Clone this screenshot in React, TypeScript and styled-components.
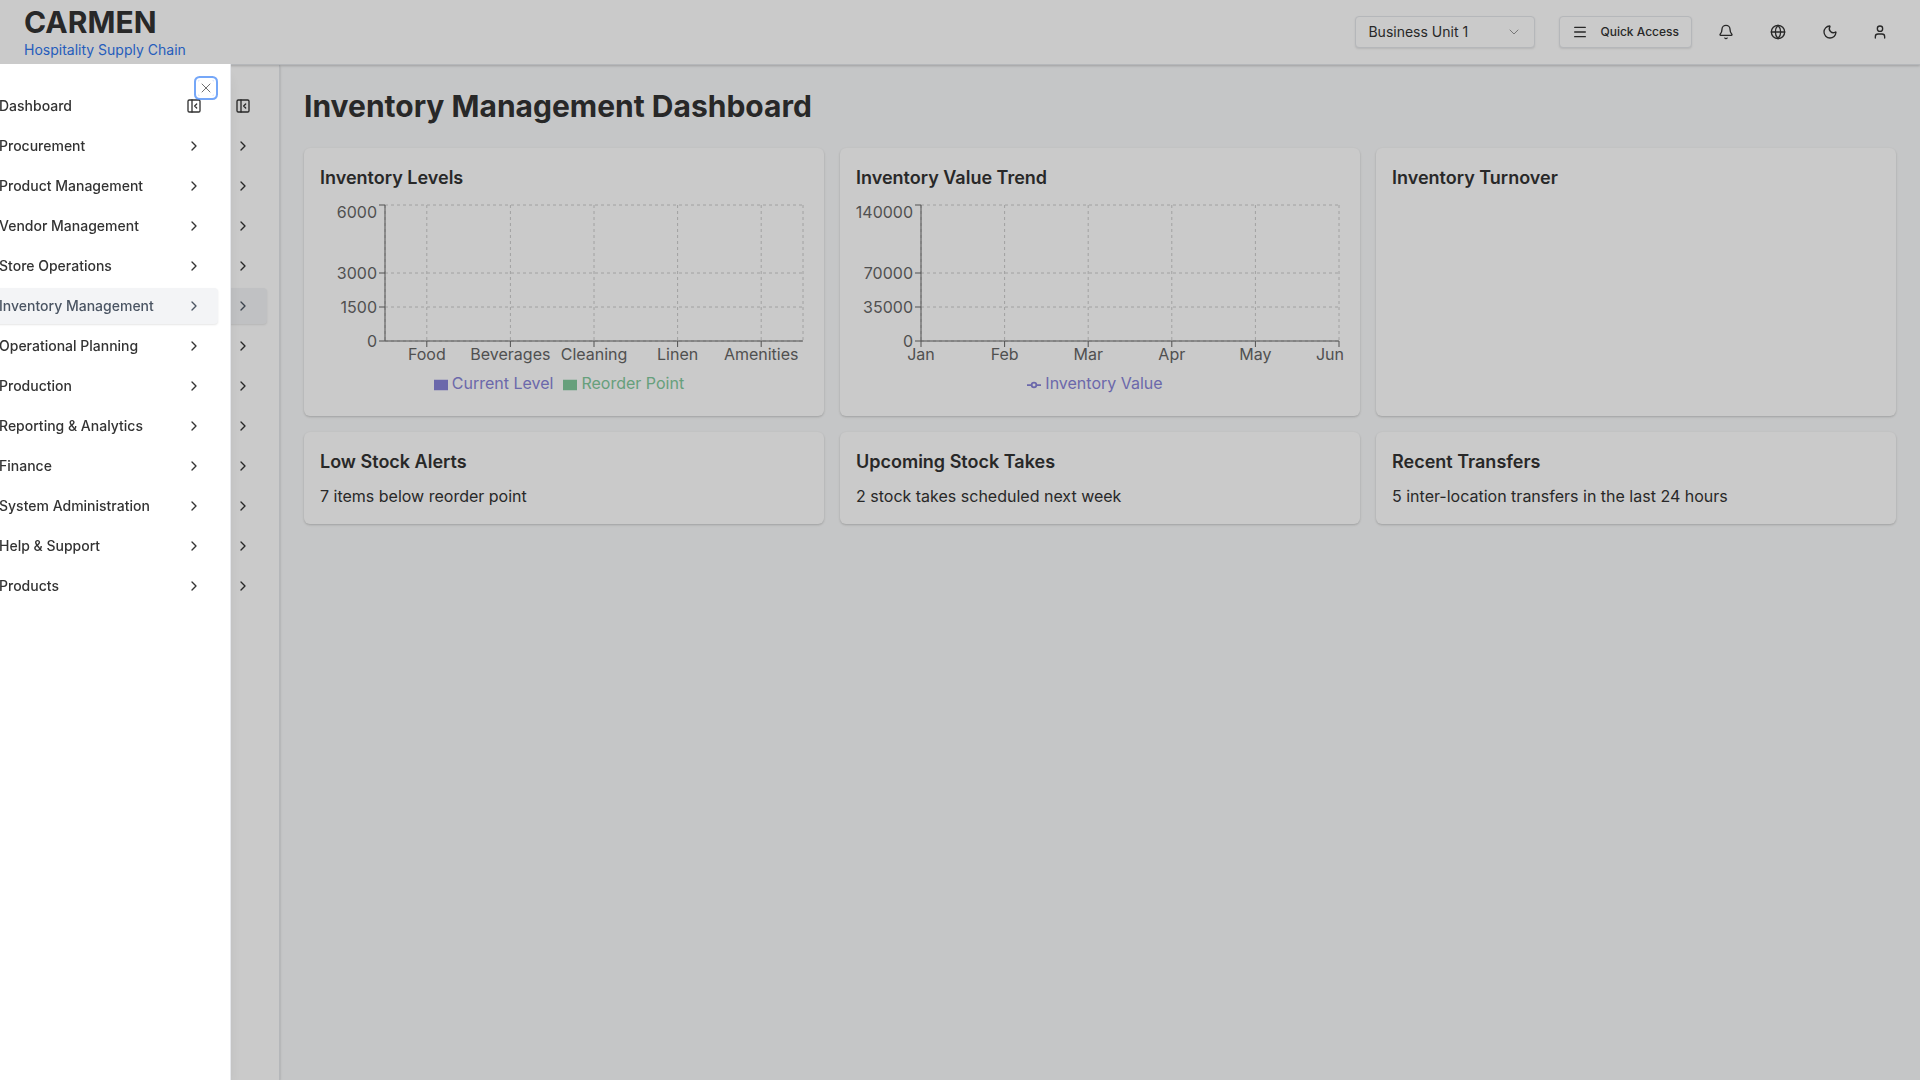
import React, { useEffect, useRef, useState } from "react";
import styled, { createGlobalStyle, css } from "styled-components";
import { Bell, ChevronDown, ChevronRight, Globe, Menu, Moon, PanelLeftClose, User, X } from "lucide-react";

const colors = {
  text: "#333333",
  muted: "#4b5563",
  surface: "#ffffff",
  page: "#f9fafb",
  border: "#e5e7eb",
  active: "#f3f4f6",
  blue: "#3b82f6",
  link: "#2f76ee",
  axis: "#666666",
  grid: "#cccccc",
  purple: "#8884d8",
  green: "#82ca9d",
};

const GlobalStyle = createGlobalStyle`
  *, *::before, *::after { box-sizing: border-box; }
  body {
    margin: 0;
    font-family: Inter, "Liberation Sans", sans-serif;
    font-size: 16px;
    line-height: 24px;
    color: ${colors.text};
    background: ${colors.page};
    -webkit-font-smoothing: antialiased;
  }
  h1, h2, p, ul { margin: 0; padding: 0; }
  button, select { font: inherit; color: inherit; }
`;

const Shell = styled.div`
  display: flex;
  flex-direction: column;
  min-height: 100vh;
`;

const Header = styled.header`
  display: flex;
  align-items: center;
  justify-content: space-between;
  height: 65px;
  padding: 0 24px;
  background: ${colors.surface};
  border-bottom: 1px solid ${colors.border};
  box-shadow: 0 1px 3px rgba(0, 0, 0, 0.1), 0 1px 2px rgba(0, 0, 0, 0.1);
  z-index: 1;
`;

const Brand = styled.a`
  display: flex;
  flex-direction: column;
  color: inherit;
  text-decoration: none;
`;

const BrandName = styled.span`
  font-size: 30px;
  line-height: 36px;
  font-weight: 700;
`;

const BrandTagline = styled.span`
  font-size: 14px;
  line-height: 20px;
  color: ${colors.link};
`;

const Tools = styled.div`
  display: flex;
  align-items: center;
  gap: 16px;
`;

const controlBox = css`
  height: 32px;
  border: 1px solid ${colors.border};
  border-radius: 4px;
  background: ${colors.surface};
  box-shadow: 0 1px 2px rgba(0, 0, 0, 0.1);
`;

const UnitPicker = styled.div`
  display: grid;
  align-items: center;
  width: 180px;
  margin-right: 8px;

  select, svg { grid-area: 1 / 1; }
  svg { justify-self: end; margin-right: 13px; opacity: 0.5; pointer-events: none; }
`;

const UnitSelect = styled.select`
  ${controlBox}
  width: 100%;
  padding: 0 12px;
  font-size: 14px;
  appearance: none;
`;

const QuickAccess = styled.button`
  ${controlBox}
  display: flex;
  align-items: center;
  gap: 12px;
  padding: 0 12px;
  font-size: 12px;
  line-height: 16px;
  font-weight: 500;
`;

const IconButton = styled.button<{ $narrow?: boolean }>`
  display: grid;
  place-items: center;
  width: ${(p) => (p.$narrow ? 32 : 36)}px;
  height: 36px;
  padding: 0;
  border: 0;
  background: none;
`;

const Body = styled.div`
  display: flex;
  flex: 1;
`;

const Sidebar = styled.aside`
  width: 280px;
  padding: 23px 12px;
  flex-shrink: 0;
  background: ${colors.surface};
  border-right: 1px solid ${colors.border};
  box-shadow: 0 1px 3px rgba(0, 0, 0, 0.1), 0 1px 2px rgba(0, 0, 0, 0.1);
`;

const NavList = styled.ul`
  display: flex;
  flex-direction: column;
  gap: 4px;
  list-style: none;
`;

const NavItem = styled.button<{ $active: boolean }>`
  display: flex;
  align-items: center;
  justify-content: space-between;
  width: 100%;
  height: 36px;
  padding: 0 16px 0 36px;
  border: 0;
  border-radius: 4px;
  font-size: 14px;
  line-height: 20px;
  font-weight: 500;
  text-align: left;
  background: ${(p) => (p.$active ? colors.active : "transparent")};
  color: ${(p) => (p.$active ? colors.muted : colors.text)};
  box-shadow: ${(p) => (p.$active ? "0 1px 2px rgba(0, 0, 0, 0.1)" : "none")};

  svg { margin-left: auto; }
`;

const Main = styled.main`
  flex: 1;
  min-width: 0;
  padding: 23px 24px 24px;
`;

const PageTitle = styled.h1`
  margin-bottom: 24px;
  font-size: 30px;
  line-height: 36px;
  font-weight: 700;
`;

const CardGrid = styled.div`
  display: grid;
  grid-template-columns: repeat(3, minmax(0, 1fr));
  gap: 16px;
`;

const Card = styled.section`
  padding: 16px;
  border-radius: 6px;
  background: ${colors.surface};
  box-shadow: 0 1px 3px rgba(0, 0, 0, 0.1), 0 1px 2px rgba(0, 0, 0, 0.1);
`;

const CardTitle = styled.h2`
  margin-bottom: 8px;
  font-size: 18px;
  line-height: 28px;
  font-weight: 600;
`;

const ChartArea = styled.div`
  height: 200px;
`;

const Plot = styled.svg`
  display: block;
  width: 100%;
  height: 171px;
  overflow: visible;

  text { font-size: 16px; fill: ${colors.axis}; }
`;

const Legend = styled.ul`
  padding-right: 10px;
  text-align: center;
  list-style: none;
`;

const LegendItem = styled.li<{ $color: string }>`
  display: inline-block;
  color: ${(p) => p.$color};

  & + & { margin-left: 10px; }
  svg { margin-right: 4px; vertical-align: middle; }
`;

const Overlay = styled.div`
  position: fixed;
  inset: 0;
  z-index: 10;
  background: rgba(0, 0, 0, 0.208);
`;

const Drawer = styled.div`
  position: fixed;
  top: 64px;
  bottom: 0;
  left: 0;
  z-index: 20;
  width: 280px;
  padding: 24px 12px;
  border-right: 1px solid ${colors.border};
  background: ${colors.surface};
  box-shadow: 0 10px 15px -3px rgba(0, 0, 0, 0.1), 0 4px 6px -4px rgba(0, 0, 0, 0.1);
  transform: translateX(-49px);
`;

const CloseButton = styled.button`
  position: absolute;
  top: 16px;
  right: 16px;
  display: grid;
  place-items: center;
  width: 16px;
  height: 16px;
  padding: 0;
  border: 0;
  border-radius: 2px;
  background: none;
  opacity: 0.7;
  box-shadow: 0 0 0 2px ${colors.surface}, 0 0 0 4px ${colors.blue};
`;

const navigation = [
  "Dashboard",
  "Procurement",
  "Product Management",
  "Vendor Management",
  "Store Operations",
  "Inventory Management",
  "Operational Planning",
  "Production",
  "Reporting & Analytics",
  "Finance",
  "System Administration",
  "Help & Support",
  "Products",
];

function Navigation({ iconsOnly = false }: { iconsOnly?: boolean }) {
  return (
    <nav aria-label={iconsOnly ? "Sidebar" : "Menu"}>
      <NavList>
        {navigation.map((label) => (
          <li key={label}>
            <NavItem type="button" aria-label={label} $active={label === "Inventory Management"}>
              {!iconsOnly && label}
              {label === "Dashboard" ? <PanelLeftClose size={16} /> : <ChevronRight size={16} />}
            </NavItem>
          </li>
        ))}
      </NavList>
    </nav>
  );
}

type ChartProps = {
  kind: "bar" | "line";
  max: number;
  categories: string[];
  series: { name: string; color: string }[];
};

const plotArea = { left: 65, top: 5, bottom: 141, rightMargin: 5 };

function Chart({ kind, max, categories, series }: ChartProps) {
  const box = useRef<HTMLDivElement>(null);
  const [width, setWidth] = useState(488);

  useEffect(() => {
    const node = box.current;
    if (!node) return;
    const observer = new ResizeObserver(() => setWidth(node.clientWidth));
    observer.observe(node);
    return () => observer.disconnect();
  }, []);

  const { left, top, bottom } = plotArea;
  const right = width - plotArea.rightMargin;
  const span = right - left;
  const xs = categories.map((_, i) =>
    kind === "bar" ? left + (span * (i + 0.5)) / categories.length : left + (span * i) / (categories.length - 1)
  );
  const verticals = kind === "bar" ? [...xs, left, right] : xs;
  const yTicks = [0, max / 4, max / 2, max].map((value) => ({
    value,
    y: bottom - ((bottom - top) * value) / max,
  }));

  return (
    <ChartArea ref={box}>
      <Plot role="img" aria-label={series.map((s) => s.name).join(", ")}>
        <g stroke={colors.grid} strokeDasharray="3 3">
          {yTicks.map(({ value, y }) => <line key={value} x1={left} x2={right} y1={y} y2={y} />)}
          {verticals.map((x) => <line key={x} x1={x} x2={x} y1={top} y2={bottom} />)}
        </g>
        <g stroke={colors.axis}>
          <line x1={left} x2={right} y1={bottom} y2={bottom} />
          <line x1={left} x2={left} y1={top} y2={bottom} />
          {xs.map((x) => <line key={x} x1={x} x2={x} y1={bottom} y2={bottom + 6} />)}
          {yTicks.map(({ value, y }) => <line key={value} x1={left - 6} x2={left} y1={y} y2={y} />)}
        </g>
        {yTicks.map(({ value, y }) => (
          <text key={value} x={left - 8} y={Math.max(y, 12)} dy="0.355em" textAnchor="end">{value}</text>
        ))}
        {xs.map((x, i) => {
          const atEdge = x > width - 10;
          return (
            <text key={x} x={atEdge ? width : x} y={bottom + 8} dy="0.71em" textAnchor={atEdge ? "end" : "middle"}>
              {categories[i]}
            </text>
          );
        })}
      </Plot>
      <Legend>
        {series.map(({ name, color }) => (
          <LegendItem key={name} $color={color}>
            <svg width="14" height="14" viewBox="0 0 32 32" aria-hidden="true">
              {kind === "bar" ? (
                <path d="M0,4h32v24h-32z" fill={color} />
              ) : (
                <path
                  d="M0,16h10.667A5.333,5.333,0,1,1,21.333,16H32M21.333,16A5.333,5.333,0,1,1,10.667,16"
                  fill="none"
                  stroke={color}
                  strokeWidth="4"
                />
              )}
            </svg>
            {name}
          </LegendItem>
        ))}
      </Legend>
    </ChartArea>
  );
}

export default function App() {
  return (
    <>
      <GlobalStyle />
      <Shell>
        <Header>
          <Brand href="#">
            <BrandName>CARMEN</BrandName>
            <BrandTagline>Hospitality Supply Chain</BrandTagline>
          </Brand>
          <Tools>
            <UnitPicker>
              <UnitSelect aria-label="Business unit" defaultValue="1">
                <option value="1">Business Unit 1</option>
              </UnitSelect>
              <ChevronDown size={16} strokeWidth={1.5} />
            </UnitPicker>
            <QuickAccess type="button">
              <Menu size={16} />
              Quick Access
            </QuickAccess>
            <IconButton type="button" aria-label="Notifications"><Bell size={16} /></IconButton>
            <IconButton type="button" aria-label="Language"><Globe size={16} /></IconButton>
            <IconButton type="button" aria-label="Theme"><Moon size={16} /></IconButton>
            <IconButton type="button" aria-label="Account" $narrow><User size={16} /></IconButton>
          </Tools>
        </Header>
        <Body>
          <Sidebar>
            <Navigation iconsOnly />
          </Sidebar>
          <Main>
            <PageTitle>Inventory Management Dashboard</PageTitle>
            <CardGrid>
              <Card>
                <CardTitle>Inventory Levels</CardTitle>
                <Chart
                  kind="bar"
                  max={6000}
                  categories={["Food", "Beverages", "Cleaning", "Linen", "Amenities"]}
                  series={[
                    { name: "Current Level", color: colors.purple },
                    { name: "Reorder Point", color: colors.green },
                  ]}
                />
              </Card>
              <Card>
                <CardTitle>Inventory Value Trend</CardTitle>
                <Chart
                  kind="line"
                  max={140000}
                  categories={["Jan", "Feb", "Mar", "Apr", "May", "Jun"]}
                  series={[{ name: "Inventory Value", color: colors.purple }]}
                />
              </Card>
              <Card>
                <CardTitle>Inventory Turnover</CardTitle>
              </Card>
              <Card>
                <CardTitle>Low Stock Alerts</CardTitle>
                <p>7 items below reorder point</p>
              </Card>
              <Card>
                <CardTitle>Upcoming Stock Takes</CardTitle>
                <p>2 stock takes scheduled next week</p>
              </Card>
              <Card>
                <CardTitle>Recent Transfers</CardTitle>
                <p>5 inter-location transfers in the last 24 hours</p>
              </Card>
            </CardGrid>
          </Main>
        </Body>
      </Shell>
      <Overlay />
      <Drawer role="dialog" aria-label="Menu">
        <Navigation />
        <CloseButton type="button" aria-label="Close"><X size={16} strokeWidth={1.5} /></CloseButton>
      </Drawer>
    </>
  );
}
